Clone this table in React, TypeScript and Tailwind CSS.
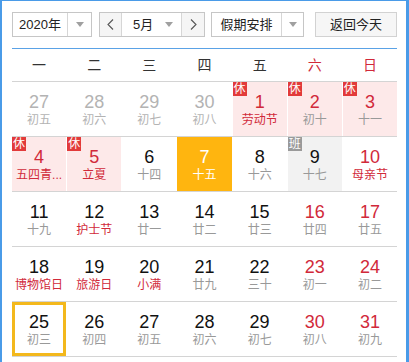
import React from 'react';

type Day = {
  n: number;
  lunar: string;
  other?: boolean;
  red?: boolean;
  lunarRed?: boolean;
  rest?: boolean;
  work?: boolean;
  today?: boolean;
  selected?: boolean;
};

const weeks: Day[][] = [
  [
    { n: 27, lunar: '初五', other: true },
    { n: 28, lunar: '初六', other: true },
    { n: 29, lunar: '初七', other: true },
    { n: 30, lunar: '初八', other: true },
    { n: 1, lunar: '劳动节', red: true, lunarRed: true, rest: true },
    { n: 2, lunar: '初十', red: true, rest: true },
    { n: 3, lunar: '十一', red: true, rest: true },
  ],
  [
    { n: 4, lunar: '五四青...', red: true, lunarRed: true, rest: true },
    { n: 5, lunar: '立夏', red: true, lunarRed: true, rest: true },
    { n: 6, lunar: '十四' },
    { n: 7, lunar: '十五', today: true },
    { n: 8, lunar: '十六' },
    { n: 9, lunar: '十七', work: true },
    { n: 10, lunar: '母亲节', red: true, lunarRed: true },
  ],
  [
    { n: 11, lunar: '十九' },
    { n: 12, lunar: '护士节', lunarRed: true },
    { n: 13, lunar: '廿一' },
    { n: 14, lunar: '廿二' },
    { n: 15, lunar: '廿三' },
    { n: 16, lunar: '廿四', red: true },
    { n: 17, lunar: '廿五', red: true },
  ],
  [
    { n: 18, lunar: '博物馆日', lunarRed: true },
    { n: 19, lunar: '旅游日', lunarRed: true },
    { n: 20, lunar: '小满', lunarRed: true },
    { n: 21, lunar: '廿九' },
    { n: 22, lunar: '三十' },
    { n: 23, lunar: '初一', red: true },
    { n: 24, lunar: '初二', red: true },
  ],
  [
    { n: 25, lunar: '初三', selected: true },
    { n: 26, lunar: '初四' },
    { n: 27, lunar: '初五' },
    { n: 28, lunar: '初六' },
    { n: 29, lunar: '初七' },
    { n: 30, lunar: '初八', red: true },
    { n: 31, lunar: '初九', red: true },
  ],
];

const weekdays = ['一', '二', '三', '四', '五', '六', '日'];

function Caret() {
  return (
    <svg width="8" height="5" viewBox="0 0 8 5">
      <path d="M0 0h8L4 5z" fill="#a0a0a0" />
    </svg>
  );
}

function Chevron({ dir }: { dir: 'l' | 'r' }) {
  return (
    <svg width="7" height="11" viewBox="0 0 7 11">
      <polyline
        points={dir === 'l' ? '6,0.5 1,5.5 6,10.5' : '1,0.5 6,5.5 1,10.5'}
        fill="none"
        stroke="#555"
        strokeWidth="1.1"
      />
    </svg>
  );
}

function DayCell({ d }: { d: Day }) {
  let bg = 'bg-white';
  if (d.rest) bg = 'bg-[#fde9e9]';
  if (d.work) bg = 'bg-[#f2f2f2]';
  if (d.today) bg = 'bg-[#ffb50f]';

  let numColor = 'text-[#111]';
  if (d.red) numColor = 'text-[#d1293a]';
  if (d.other) numColor = 'text-[#b3b3b3]';
  if (d.today) numColor = 'text-white';

  let lunarColor = 'text-[#999]';
  if (d.lunarRed) lunarColor = 'text-[#d1293a]';
  if (d.other) lunarColor = 'text-[#b3b3b3]';
  if (d.today) lunarColor = 'text-white';

  return (
    <div
      className={`relative h-[54px] flex flex-col items-center ${bg} ${
        d.selected ? 'border-[3px] border-[#f3b81c] pt-[7px]' : 'pt-[10px]'
      }`}
    >
      {d.rest && (
        <span className="absolute left-0 top-0 w-[14px] h-[14px] bg-[#e23a3a] text-white text-[12px] leading-[14px] text-center">
          休
        </span>
      )}
      {d.work && (
        <span className="absolute left-0 top-0 w-[14px] h-[14px] bg-[#9a9a9a] text-white text-[12px] leading-[14px] text-center">
          班
        </span>
      )}
      <span className={`text-[18px] leading-[20px] ${numColor}`}>{d.n}</span>
      <span className={`text-[12px] leading-[16px] whitespace-nowrap ${lunarColor}`}>{d.lunar}</span>
    </div>
  );
}

export default function App() {
  return (
    <div
      className="w-[409px] h-[362px] bg-white border-l-2 border-r-[3px] border-t border-[#4a9be8] pl-[10px] pr-[9px] pt-[11px] overflow-hidden"
      style={{ fontFamily: '"Liberation Sans", "Noto Sans CJK SC", sans-serif' }}
    >
      <div className="flex items-center h-[25px] text-[13px] text-[#222]">
        <div className="flex w-[80px] h-[25px] border border-[#c6c6c6] bg-white">
          <div className="w-[54px] flex items-center justify-center">2020年</div>
          <div className="flex-1 border-l border-[#d6d6d6] flex items-center justify-center">
            <Caret />
          </div>
        </div>
        <div className="flex ml-[7px] w-[106px] h-[25px] border border-[#c6c6c6] bg-white">
          <div className="w-[22px] bg-[#f5f5f5] border-r border-[#d6d6d6] flex items-center justify-center">
            <Chevron dir="l" />
          </div>
          <div className="flex-1 flex items-center pl-[11px] pr-[8px] justify-between">
            <span>5月</span>
            <Caret />
          </div>
          <div className="w-[23px] bg-[#f5f5f5] border-l border-[#d6d6d6] flex items-center justify-center">
            <Chevron dir="r" />
          </div>
        </div>
        <div className="flex ml-[6px] w-[93px] h-[25px] border border-[#c6c6c6] bg-white">
          <div className="w-[69px] flex items-center justify-center">假期安排</div>
          <div className="flex-1 border-l border-[#d6d6d6] flex items-center justify-center">
            <Caret />
          </div>
        </div>
        <div className="ml-[11px] w-[82px] h-[25px] border border-[#d2d2d2] bg-[#f6f6f6] flex items-center justify-center">
          返回今天
        </div>
      </div>

      <div className="mt-[11px] h-px bg-[#5aa2e6]" />

      <div className="grid grid-cols-7 gap-x-px h-[33px] border-b border-[#d4d4d4] text-[14px] items-center">
        {weekdays.map((w, i) => (
          <div key={w} className={`text-center ${i >= 5 ? 'text-[#d1293a]' : 'text-[#333]'}`}>
            {w}
          </div>
        ))}
      </div>

      {weeks.map((week, i) => (
        <div key={i} className="grid grid-cols-7 gap-x-px border-b border-[#d4d4d4]">
          {week.map((d, j) => (
            <DayCell key={j} d={d} />
          ))}
        </div>
      ))}
    </div>
  );
}
